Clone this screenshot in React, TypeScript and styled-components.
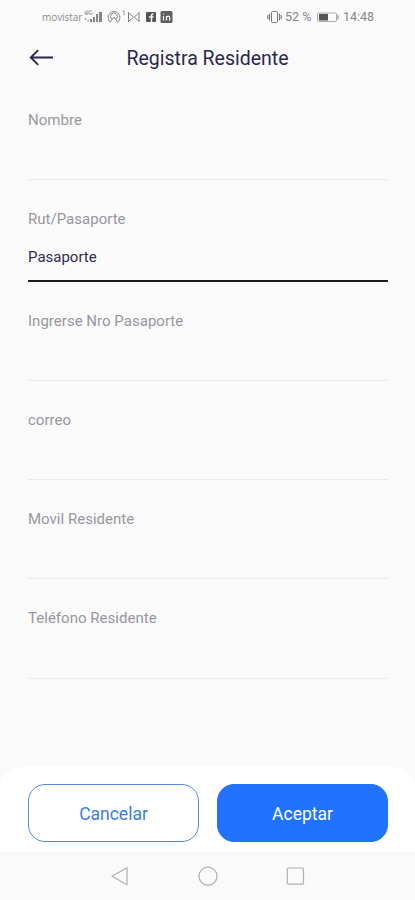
import React from "react";
import styled, { createGlobalStyle } from "styled-components";

const GlobalStyle = createGlobalStyle`
  * { box-sizing: border-box; }
  body { margin: 0; background: #fafafa; font-family: Roboto, sans-serif; }
`;

const Screen = styled.div`
  display: flex;
  flex-direction: column;
  width: 415px;
  height: 900px;
  background: #fafafa;
  overflow: hidden;
`;

const StatusBar = styled.div`
  display: flex;
  align-items: center;
  justify-content: space-between;
  height: 33px;
  padding: 0 38px 0 42px;
  color: #858585;
`;

const StatusGroup = styled.div`
  display: flex;
  align-items: center;
`;

const Carrier = styled.span`
  font: 10px/14px "Open Sans", sans-serif;
  letter-spacing: -0.05px;
  width: 41px;
  white-space: nowrap;
  color: #8c8c8c;
`;

const StatusText = styled.span<{ $width: number }>`
  font: 400 12.5px/16px Roboto, sans-serif;
  color: #858585;
  letter-spacing: 0;
  width: ${({ $width }) => $width}px;
  white-space: nowrap;
`;

const Header = styled.header`
  display: grid;
  grid-template-columns: 28px 1fr 28px;
  align-items: center;
  height: 49px;
  padding: 0 28px;
`;

const BackButton = styled.button`
  display: flex;
  padding: 0;
  border: 0;
  background: none;
`;

const Title = styled.h1`
  margin: 0;
  padding-top: 2px;
  text-align: center;
  font-size: 19.5px;
  font-weight: 400;
  line-height: 24px;
  color: #2a2850;
`;

const Form = styled.main`
  display: flex;
  flex-direction: column;
  gap: 29px;
  flex: 1;
  padding: 28px 27px 0 28px;
`;

const Field = styled.label<{ $active?: boolean; $height: number }>`
  display: flex;
  flex-direction: column;
  height: ${({ $height }) => $height}px;
  border-bottom: ${({ $active }) => ($active ? "2px solid #1c1b20" : "1px solid #ebebed")};
`;

const Label = styled.span`
  font-size: 15px;
  line-height: 20px;
  letter-spacing: 0.02px;
  color: #98979f;
`;

const Value = styled.span`
  margin-top: 18px;
  font-size: 15px;
  line-height: 20px;
  color: #2f2c50;
`;

const Actions = styled.footer`
  display: grid;
  grid-template-columns: 1fr 1fr;
  gap: 18px;
  height: 85px;
  padding: 17px 27px 10px 28px;
  border-radius: 22px 22px 0 0;
  background: #fff;
`;

const Button = styled.button<{ $primary?: boolean }>`
  padding: 2px 0 0;
  border: 1px solid ${({ $primary }) => ($primary ? "#2172ff" : "#528bdc")};
  border-radius: 17px;
  background: ${({ $primary }) => ($primary ? "#2172ff" : "#fff")};
  color: ${({ $primary }) => ($primary ? "#fff" : "#397fdf")};
  font: 400 17.5px/22px Roboto, sans-serif;
`;

const NavBar = styled.nav`
  display: flex;
  align-items: center;
  justify-content: center;
  gap: 68px;
  height: 48px;
`;

const fields: { label: string; value?: string; height: number }[] = [
  { label: "Nombre", height: 70 },
  { label: "Rut/Pasaporte", value: "Pasaporte", height: 73 },
  { label: "Ingrerse Nro Pasaporte", height: 70 },
  { label: "correo", height: 70 },
  { label: "Movil Residente", height: 70 },
  { label: "Teléfono Residente", height: 71 },
];

const NotificationIcons = () => (
  <svg width="91" height="16" viewBox="0 0 91 16" fill="none">
    <g stroke="#858585">
      <path d="M2 2v3h3M4 1v5M6 2h3M6 2v3h3V4" strokeWidth=".8" />
      <path d="M2 9l1 2M4 12h2" />
    </g>
    <path d="M7 13v-3h2v3zM10 13V8h2v5zM13 13V5h2v8zM16 13V3h3v10z" fill="#858585" />
    <g stroke="#858585" strokeLinecap="round">
      <path d="M27 13a6 6 0 1 1 8 0M28.5 10a3.5 3.5 0 1 1 5 0M27.5 13l3.5-5 3.5 5" />
      <path d="M40 2h1v4" strokeWidth=".8" />
      <path d="M45.5 3.5v9M56 3.5v9M46 4l4.8 4.5L56 4M46 12l3.4-3M52 9l4 3" />
    </g>
    <rect x="63" y="3" width="10" height="10" rx="1" fill="#555" />
    <path d="M68.5 13V6.5q0-1.5 2-1.5M66 8h4.5" stroke="#fafafa" strokeWidth="1.4" />
    <rect x="77.5" y="2" width="12" height="12" rx="1.5" fill="#606060" />
    <path d="M80.5 7v4.5M83.5 11.5V7M83.5 8.5c1-2 3.2-1.5 3.2.2v2.8M80 5h1" stroke="#fafafa" strokeWidth="1.2" />
  </svg>
);

const VibrateIcon = () => (
  <svg width="18" height="16" viewBox="0 0 18 16" fill="none" stroke="#777">
    <rect x="4.5" y="2.5" width="6" height="11" rx="1" />
    <path d="M2.5 4.5v7M12.5 4.5v7M.8 6v4M14.2 6v4" strokeWidth="1.1" />
  </svg>
);

const BatteryIcon = () => (
  <svg width="27" height="16" viewBox="0 0 27 16" fill="none">
    <rect x="1.5" y="4" width="19" height="8.5" rx="1" stroke="#aaa" />
    <rect x="3" y="5" width="9" height="6.5" fill="#555" />
    <path d="M22 6v4.5" stroke="#aaa" strokeWidth="1.5" />
  </svg>
);

export default function App() {
  return (
    <>
      <GlobalStyle />
      <Screen>
        <StatusBar>
          <StatusGroup>
            <Carrier>movistar</Carrier>
            <NotificationIcons />
          </StatusGroup>
          <StatusGroup>
            <VibrateIcon />
            <StatusText $width={31}>52 %</StatusText>
            <BatteryIcon />
            <StatusText $width={34}>14:48</StatusText>
          </StatusGroup>
        </StatusBar>
        <Header>
          <BackButton aria-label="Volver">
            <svg width="28" height="22" viewBox="0 0 28 22" fill="none" stroke="#29264d" strokeWidth="1.8">
              <path d="M10.2 3.2L2.7 10.5L10.2 17.8M3.2 10.5H25" />
            </svg>
          </BackButton>
          <Title>Registra Residente</Title>
        </Header>
        <Form>
          {fields.map(({ label, value, height }) => (
            <Field key={label} $active={Boolean(value)} $height={height}>
              <Label>{label}</Label>
              {value && <Value>{value}</Value>}
            </Field>
          ))}
        </Form>
        <Actions>
          <Button>Cancelar</Button>
          <Button $primary>Aceptar</Button>
        </Actions>
        <NavBar>
          <svg width="20" height="22" viewBox="0 0 20 22" fill="none" stroke="#b0b0b0" strokeWidth="1.2">
            <path d="M17 2.8v17L2 11.3z" strokeLinejoin="round" />
          </svg>
          <svg width="20" height="22" viewBox="0 0 20 22" fill="none" stroke="#b0b0b0" strokeWidth="1.2">
            <circle cx="10" cy="11.2" r="9" />
          </svg>
          <svg width="20" height="22" viewBox="0 0 20 22" fill="none" stroke="#b0b0b0" strokeWidth="1.2">
            <rect x="1.3" y="3" width="16.2" height="16.2" rx="1" />
          </svg>
        </NavBar>
      </Screen>
    </>
  );
}
